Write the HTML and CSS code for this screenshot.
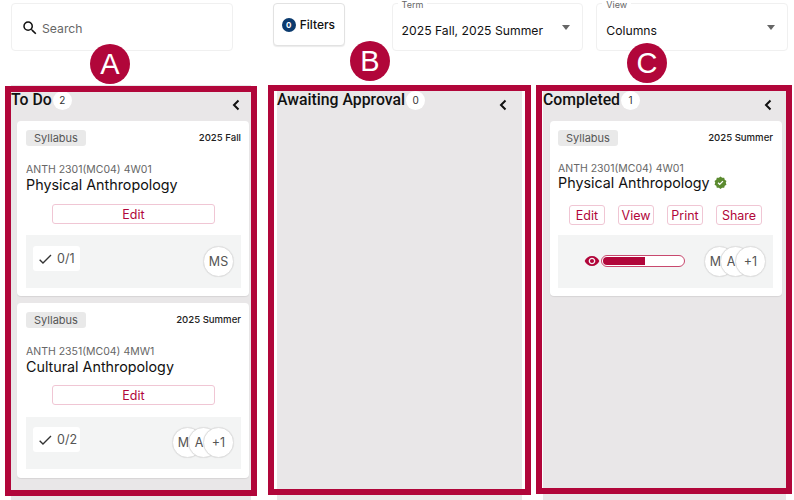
FILE: index.html
```html
<!DOCTYPE html>
<html lang="en">
<head>
    <meta charset="UTF-8">
    <meta name="viewport" content="width=device-width, initial-scale=1.0">
    <title>Syllabus Board</title>
    <link rel="stylesheet" href="styles.css">
</head>
<body>
    <div class="page">
        <div class="toolbar">
            <div class="search">
                <svg class="search-icon" width="18" height="18" viewBox="0 0 24 24"><path d="M15.5 14h-.79l-.28-.27A6.47 6.47 0 0 0 16 9.5 6.5 6.5 0 1 0 9.5 16c1.61 0 3.09-.59 4.23-1.57l.27.28v.79l5 4.99L20.49 19l-4.99-5zm-6 0C7.01 14 5 11.99 5 9.5S7.01 5 9.5 5 14 7.01 14 9.5 11.99 14 9.5 14z"/></svg>
                <span>Search</span>
            </div>
            <button class="filters-btn"><span class="filters-count">0</span>Filters</button>
            <div class="select select-term">
                <span class="select-label">Term</span>
                <span class="select-value">2025 Fall, 2025 Summer</span>
                <span class="select-arrow"></span>
            </div>
            <div class="select select-view">
                <span class="select-label">View</span>
                <span class="select-value">Columns</span>
                <span class="select-arrow"></span>
            </div>
        </div>

        <div class="board">
            <div class="column column-todo">
                <div class="column-header">
                    <h2>To Do</h2>
                    <span class="count">2</span>
                    <svg class="collapse" width="10" height="12" viewBox="0 0 10 12"><path d="M7.500 1.500 3 6l4.500 4.500" fill="none" stroke="#111" stroke-width="2"/></svg>
                </div>
                <div class="card">
                    <div class="card-top"><span class="tag">Syllabus</span><span class="term">2025 Fall</span></div>
                    <div class="code">ANTH 2301(MC04) 4W01</div>
                    <div class="title">Physical Anthropology</div>
                    <div class="actions"><button class="btn btn-wide">Edit</button></div>
                    <div class="card-footer">
                        <div class="progress-count">
                            <svg width="16" height="16" viewBox="0 0 24 24"><path d="M4 13l5 5L21 6" fill="none" stroke="#333" stroke-width="2"/></svg>
                            0/1
                        </div>
                        <div class="avatars"><span class="avatar">MS</span></div>
                    </div>
                </div>
                <div class="card">
                    <div class="card-top"><span class="tag">Syllabus</span><span class="term">2025 Summer</span></div>
                    <div class="code">ANTH 2351(MC04) 4MW1</div>
                    <div class="title">Cultural Anthropology</div>
                    <div class="actions"><button class="btn btn-wide">Edit</button></div>
                    <div class="card-footer">
                        <div class="progress-count">
                            <svg width="16" height="16" viewBox="0 0 24 24"><path d="M4 13l5 5L21 6" fill="none" stroke="#333" stroke-width="2"/></svg>
                            0/2
                        </div>
                        <div class="avatars"><span class="avatar avatar-covered">M</span><span class="avatar avatar-covered">A</span><span class="avatar">+1</span></div>
                    </div>
                </div>
            </div>

            <div class="column column-approval">
                <div class="column-header">
                    <h2>Awaiting Approval</h2>
                    <span class="count">0</span>
                    <svg class="collapse" width="10" height="12" viewBox="0 0 10 12"><path d="M7.500 1.500 3 6l4.500 4.500" fill="none" stroke="#111" stroke-width="2"/></svg>
                </div>
            </div>

            <div class="column column-completed">
                <div class="column-header">
                    <h2>Completed</h2>
                    <span class="count">1</span>
                    <svg class="collapse" width="10" height="12" viewBox="0 0 10 12"><path d="M7.500 1.500 3 6l4.500 4.500" fill="none" stroke="#111" stroke-width="2"/></svg>
                </div>
                <div class="card">
                    <div class="card-top"><span class="tag">Syllabus</span><span class="term">2025 Summer</span></div>
                    <div class="code code-tight">ANTH 2301(MC04) 4W01</div>
                    <div class="title">Physical Anthropology
                        <svg class="verified" width="13" height="13" viewBox="0 0 24 24"><path d="M12 1l3 2.400 3.800-.3 1 3.700 3.200 2.200L21.700 12.500l1.300 3.500-3.200 2.200-1 3.700-3.800-.3L12 24l-3-2.400-3.800.3-1-3.700L1 16l1.300-3.500L1 9l3.200-2.200 1-3.700 3.800.3z" fill="#5b8a2f"/><path d="M7.500 12.500l3 3 6-6" fill="none" stroke="#fff" stroke-width="2.500"/></svg>
                    </div>
                    <div class="actions actions-row">
                        <button class="btn">Edit</button>
                        <button class="btn">View</button>
                        <button class="btn">Print</button>
                        <button class="btn btn-share">Share</button>
                    </div>
                    <div class="card-footer">
                        <div class="viewed">
                            <svg width="16" height="16" viewBox="0 0 24 24"><path fill="#b1063a" d="M12 4.500C7 4.500 2.730 7.610 1 12c1.730 4.390 6 7.500 11 7.500s9.270-3.110 11-7.500c-1.730-4.390-6-7.500-11-7.500zM12 17c-2.760 0-5-2.240-5-5s2.240-5 5-5 5 2.240 5 5-2.240 5-5 5zm0-8c-1.660 0-3 1.340-3 3s1.340 3 3 3 3-1.340 3-3-1.340-3-3-3z"/></svg>
                            <div class="bar"><div class="bar-fill" style="width: 52%"></div></div>
                        </div>
                        <div class="avatars"><span class="avatar avatar-covered">M</span><span class="avatar avatar-covered">A</span><span class="avatar">+1</span></div>
                    </div>
                </div>
            </div>
        </div>

        <!-- callouts drawn over the board -->
        <div class="callout callout-a"></div>
        <div class="callout callout-b"></div>
        <div class="callout callout-c"></div>
        <div class="marker marker-a">A</div>
        <div class="marker marker-b">B</div>
        <div class="marker marker-c">C</div>
    </div>
</body>
</html>
```

FILE: styles.css
```css
body {
    margin: 0;
    font-family: Inter, "Liberation Sans", sans-serif;
    color: #111;
    background: white;
}

.page {
    position: relative;
    width: 794px;
    height: 500px;
    overflow: hidden;
}

.toolbar {
    display: flex;
    align-items: flex-start;
    padding: 3px 6px 0 11px;
    height: 85px;
    box-sizing: border-box;
}

.search {
    width: 222px;
    height: 48px;
    box-sizing: border-box;
    display: flex;
    align-items: center;
    gap: 3px;
    padding: 2px 0 0 9px;
    border: 1px solid #f0f0f0;
    border-radius: 4px;
    font-size: 12.2px;
    color: #666;
}

.search-icon {
    fill: #111;
}

.filters-btn {
    width: 72px;
    height: 43px;
    margin-left: 40px;
    display: flex;
    align-items: center;
    gap: 4px;
    padding: 0 0 0 8px;
    background: white;
    border: 1px solid #e2e2e2;
    border-radius: 4px;
    box-shadow: 0 1px 1px rgba(0, 0, 0, 0.08);
    font-family: inherit;
    font-size: 12px;
    font-weight: 500;
    color: #111;
}

.filters-count {
    width: 14px;
    height: 14px;
    border-radius: 50%;
    background: #0b3a6e;
    color: white;
    font-size: 8px;
    font-weight: 700;
    line-height: 14px;
    text-align: center;
}

.select {
    position: relative;
    width: 192px;
    height: 48px;
    box-sizing: border-box;
    padding: 19px 0 0 9px;
    border: 1px solid #f0f0f0;
    border-radius: 4px;
    font-size: 12.2px;
}

.select-term {
    margin-left: 47px;
}

.select-view {
    margin-left: 13px;
}

.select-label {
    position: absolute;
    top: -4px;
    left: 5px;
    padding: 0 4px;
    background: white;
    font-size: 9px;
    line-height: 10px;
    color: #666;
}

.select-arrow {
    position: absolute;
    top: 21px;
    right: 12px;
    border-left: 4.5px solid transparent;
    border-right: 4.5px solid transparent;
    border-top: 5px solid #666;
}

.board {
    display: flex;
    align-items: stretch;
    height: 415px;
    padding-left: 11px;
}

.column {
    box-sizing: border-box;
    background: #e9e7e8;
    padding: 0 2px 0 6px;
}

.column-todo {
    width: 240px;
    margin-right: 26px;
}

.column-approval {
    width: 245px;
    margin-right: 21px;
}

.column-completed {
    width: 243px;
    padding-left: 7px;
}

.column-header {
    display: flex;
    align-items: flex-start;
    height: 36px;
    margin-left: -6px;
    padding-top: 5px;
    box-sizing: border-box;
    position: relative;
}

.column-completed .column-header {
    margin-left: -7px;
}

.column-header h2 {
    margin: 0;
    font-family: Roboto, sans-serif;
    font-size: 15.8px;
    font-weight: 500;
    line-height: 20px;
}

.count {
    width: 19px;
    height: 19px;
    margin: 1px 0 0 1px;
    border-radius: 50%;
    background: white;
    font-size: 10px;
    line-height: 19px;
    text-align: center;
    color: #333;
}

.collapse {
    position: absolute;
    top: 14px;
    right: 8px;
}

.column-approval .collapse {
    right: 12px;
}

.column-completed .collapse {
    right: 11px;
}

.card {
    width: 232px;
    height: 175px;
    box-sizing: border-box;
    margin-bottom: 7px;
    padding: 9px 8px 0 9px;
    background: white;
    border-radius: 4px;
    box-shadow: 0 1px 1px rgba(0, 0, 0, 0.08);
}

.column-completed .card {
    padding: 9px 9px 0 8px;
}

.card-top {
    display: flex;
    justify-content: space-between;
    align-items: flex-start;
}

.tag {
    width: 60px;
    height: 16px;
    border-radius: 3px;
    background: #e9e9e9;
    font-size: 11px;
    line-height: 16px;
    text-align: center;
    color: #555;
}

.term {
    margin-top: 1px;
    font-size: 9.6px;
    font-weight: 500;
    line-height: 14px;
    color: #222;
}

.code {
    margin: 17px 0 -1px;
    font-size: 10.5px;
    line-height: 14px;
    color: #666;
}

.code-tight {
    margin: 16px 0 -2px;
}

.title {
    font-size: 14.3px;
    line-height: 18px;
}

.verified {
    vertical-align: -1px;
}

.actions {
    display: flex;
    justify-content: center;
    margin-top: 10px;
}

.card + .card .actions {
    margin-top: 9px;
}

.actions-row {
    gap: 13px;
    margin-top: 13px;
}

.btn {
    width: 36px;
    height: 20px;
    padding: 0;
    background: white;
    border: 1px solid #f0c6d4;
    border-radius: 3px;
    font-family: inherit;
    font-size: 12.5px;
    color: #b1063a;
}

.btn-share {
    width: 46px;
}

.btn-wide {
    width: 163px;
}

.card-footer {
    display: flex;
    justify-content: space-between;
    align-items: center;
    height: 53px;
    margin-top: 11px;
    padding: 0 7px;
    background: #f3f4f4;
}

.card + .card .card-footer {
    height: 52.4px;
    margin-top: 11.6px;
}

.actions-row + .card-footer {
    margin-top: 10px;
}

.progress-count {
    display: flex;
    align-items: center;
    gap: 4px;
    width: 47px;
    height: 25px;
    box-sizing: border-box;
    margin-bottom: 6px;
    padding-left: 4px;
    background: white;
    border-radius: 3px;
    font-size: 12.5px;
    color: #555;
}

.avatars {
    display: flex;
}

.avatar {
    width: 29px;
    height: 29px;
    border: 1px solid #e0e0e0;
    border-radius: 50%;
    background: white;
    font-size: 12.5px;
    line-height: 29px;
    text-align: center;
    color: #555;
    box-shadow: 0 0 1px rgba(0, 0, 0, 0.1);
}

.avatar + .avatar {
    margin-left: -15.5px;
}

/* initial sits left of centre because the next avatar overlaps it */
.avatar-covered {
    text-indent: -8px;
}

.viewed {
    display: flex;
    align-items: center;
    gap: 1px;
    margin-left: 19px;
    margin-bottom: 1px;
}

.bar {
    width: 84px;
    height: 12px;
    box-sizing: border-box;
    border: 1px solid #c8486e;
    border-radius: 6px;
    background: white;
    padding: 1px;
    overflow: hidden;
}

.bar-fill {
    height: 100%;
    background: #b1063a;
    border-radius: 4px 0 0 4px;
}

.callout {
    position: absolute;
    box-sizing: border-box;
    border: 6px solid #b1063a;
}

.callout-a {
    left: 5px;
    top: 86px;
    width: 252px;
    height: 410px;
}

.callout-b {
    left: 268px;
    top: 85px;
    width: 263px;
    height: 410px;
}

.callout-c {
    left: 536px;
    top: 85px;
    width: 256px;
    height: 409px;
}

.marker {
    position: absolute;
    width: 40px;
    height: 40px;
    border-radius: 50%;
    background: #b1063a;
    color: white;
    font-family: "Liberation Sans", sans-serif;
    font-size: 29px;
    line-height: 40px;
    text-align: center;
}

.marker-a {
    left: 90px;
    top: 44px;
}

.marker-b {
    left: 350px;
    top: 41px;
}

.marker-c {
    left: 627px;
    top: 43px;
}
```
